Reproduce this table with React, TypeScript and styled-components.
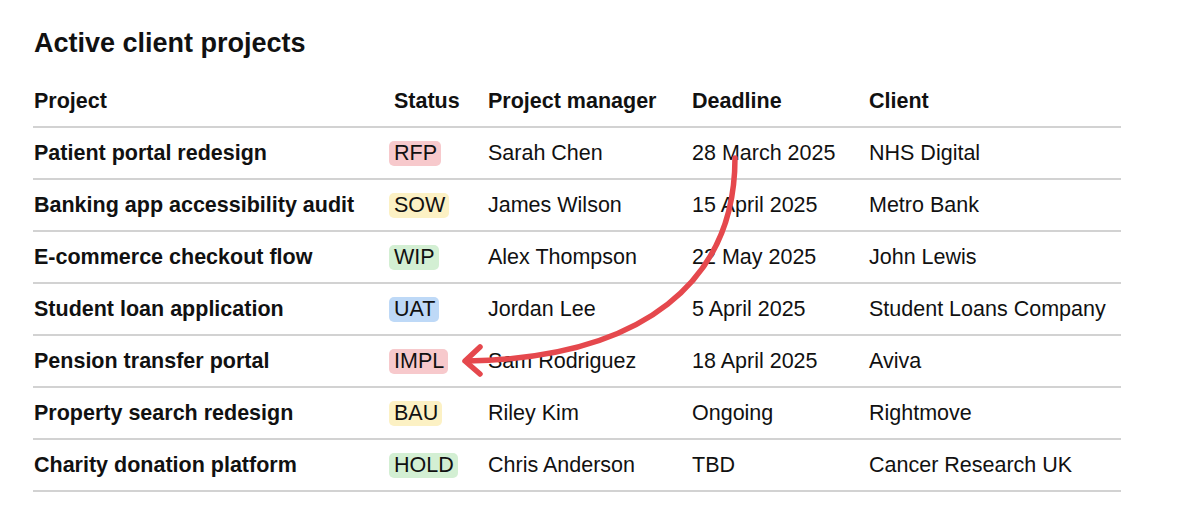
import styled, { createGlobalStyle } from "styled-components";

const GlobalStyle = createGlobalStyle`
    body {
        margin: 0;
        background: #ffffff;
        font-family: "Liberation Sans", Arial, sans-serif;
        color: #111111;
    }
`;

const Page = styled.div`
    position: relative;
    width: 1200px;
    height: 520px;
    padding: 28px 0 0 34px;
    box-sizing: border-box;
    overflow: hidden;
`;

const Title = styled.h1`
    margin: 0 0 18px 0;
    font-size: 27px;
    line-height: 30px;
    font-weight: 700;
`;

const Table = styled.div`
    width: 1088px;
    margin-left: -1px;
`;

const Row = styled.div<{ $head?: boolean }>`
    display: grid;
    grid-template-columns: 360px 94px 204px 177px 1fr;
    align-items: center;
    height: 50px;
    border-bottom: 2px solid #d2d2d2;
    padding-left: 1px;
    font-size: 21.5px;
    font-weight: ${(p) => (p.$head ? 700 : 400)};
`;

const Cell = styled.div<{ $bold?: boolean }>`
    font-weight: ${(p) => (p.$bold ? 700 : "inherit")};
    white-space: nowrap;
`;

const badgeColours: Record<string, string> = {
    red: "#f7c9cc",
    yellow: "#fcf1c4",
    green: "#d3efd3",
    blue: "#bed9f7",
};

const Badge = styled.span<{ $tone: string }>`
    display: inline-block;
    margin-left: -5px;
    padding: 1px 4px 1px 5px;
    border-radius: 5px;
    line-height: 23px;
    background: ${(p) => badgeColours[p.$tone]};
`;

const Arrow = styled.svg`
    position: absolute;
    left: 0;
    top: 0;
    pointer-events: none;
`;

const projects = [
    { name: "Patient portal redesign", status: "RFP", tone: "red", pm: "Sarah Chen", due: "28 March 2025", client: "NHS Digital" },
    { name: "Banking app accessibility audit", status: "SOW", tone: "yellow", pm: "James Wilson", due: "15 April 2025", client: "Metro Bank" },
    { name: "E-commerce checkout flow", status: "WIP", tone: "green", pm: "Alex Thompson", due: "22 May 2025", client: "John Lewis" },
    { name: "Student loan application", status: "UAT", tone: "blue", pm: "Jordan Lee", due: "5 April 2025", client: "Student Loans Company" },
    { name: "Pension transfer portal", status: "IMPL", tone: "red", pm: "Sam Rodriguez", due: "18 April 2025", client: "Aviva" },
    { name: "Property search redesign", status: "BAU", tone: "yellow", pm: "Riley Kim", due: "Ongoing", client: "Rightmove" },
    { name: "Charity donation platform", status: "HOLD", tone: "green", pm: "Chris Anderson", due: "TBD", client: "Cancer Research UK" },
];

export default function App() {
    return (
        <Page>
            <GlobalStyle />
            <Title>Active client projects</Title>
            <Table>
                <Row $head>
                    <Cell>Project</Cell>
                    <Cell>Status</Cell>
                    <Cell>Project manager</Cell>
                    <Cell>Deadline</Cell>
                    <Cell>Client</Cell>
                </Row>
                {projects.map((p) => (
                    <Row key={p.name}>
                        <Cell $bold>{p.name}</Cell>
                        <Cell>
                            <Badge $tone={p.tone}>{p.status}</Badge>
                        </Cell>
                        <Cell>{p.pm}</Cell>
                        <Cell>{p.due}</Cell>
                        <Cell>{p.client}</Cell>
                    </Row>
                ))}
            </Table>
            <Arrow width="1200" height="520" viewBox="0 0 1200 520">
                <path
                    d="M735 158 C735 280, 645 358, 467 361"
                    fill="none"
                    stroke="#e5484d"
                    strokeWidth="5.5"
                    strokeLinecap="round"
                />
                <path
                    d="M480 347 L465 361 L480 374"
                    fill="none"
                    stroke="#e5484d"
                    strokeWidth="5.5"
                    strokeLinecap="round"
                    strokeLinejoin="round"
                />
            </Arrow>
        </Page>
    );
}
